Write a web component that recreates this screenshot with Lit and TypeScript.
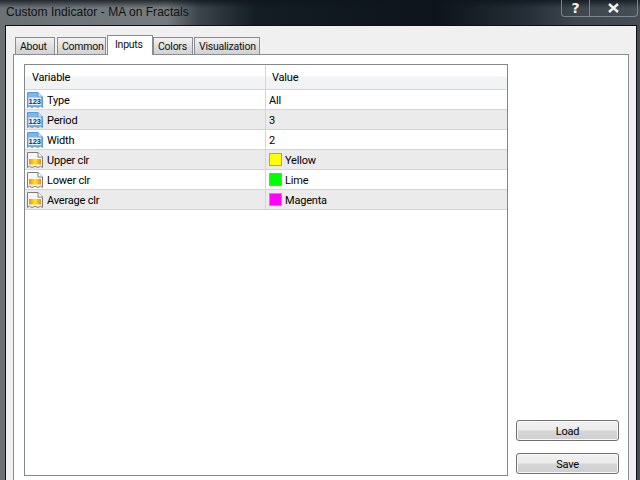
import { LitElement, html, css, svg } from "lit";
import { customElement } from "lit/decorators.js";

const rows = [
  { n: "Type", v: "All", k: "num" },
  { n: "Period", v: "3", k: "num" },
  { n: "Width", v: "2", k: "num" },
  { n: "Upper clr", v: "Yellow", k: "clr", c: "#ffff00" },
  { n: "Lower clr", v: "Lime", k: "clr", c: "#00ff00" },
  { n: "Average clr", v: "Magenta", k: "clr", c: "#ff00ff" },
];
const tabs = ["About", "Common", "Inputs", "Colors", "Visualization"];

const page = "M.5 .5H11L15.5 5V15.5L13.5 14.2L11 15.5L8 14.2L5 15.5L2.5 14.2L.5 15.5Z";
const numIcon = svg`<svg class="ico" width="16" height="16" viewBox="0 0 16 16">
  <path d=${page} fill="#7db6ea" stroke="#5a9ad6"/>
  <path d="M11 .5V5H15.5" fill="#cfe6fa" stroke="#5a9ad6"/>
  <rect x="1.5" y="5.5" width="12.5" height="7.5" fill="#e6f2fd"/>
  <text x="7.8" y="12.2" text-anchor="middle" font-family="Liberation Sans" font-size="7.5" font-weight="700" letter-spacing="0" fill="#0b3570">123</text>
</svg>`;
const clrIcon = svg`<svg class="ico" width="16" height="16" viewBox="0 0 16 16">
  <path d=${page} fill="#f7f7f7" stroke="#7c7c7c"/>
  <path d="M11 .5V5H15.5" fill="#fff" stroke="#7c7c7c"/>
  <defs><linearGradient id="g" x1="0" x2="1"><stop offset="0" stop-color="#f4890c"/><stop offset=".5" stop-color="#ffe81c"/><stop offset="1" stop-color="#f4890c"/></linearGradient></defs>
  <rect x="2" y="7" width="12" height="5.5" fill="url(#g)"/>
</svg>`;

@customElement("app-root")
export class AppRoot extends LitElement {
  static styles = css`
    :host {
      display: block;
      width: 640px;
      height: 480px;
      overflow: hidden;
      font-family: Roboto, "Liberation Sans", sans-serif;
      font-size: 11px;
      letter-spacing: -0.2px;
      color: #000;
      background:
        linear-gradient(rgba(14, 21, 28, 0.8) 0, rgba(14, 21, 28, 0) 8px),
        linear-gradient(90deg, #6a7275 0, #757c7f 26%, #3c454b 31%, #141c24 40%, #0d141b 68%, #252e36 82%, #3e474e 90%, #454e55 100%);
    }
    .title {
      height: 25px;
      display: flex;
      align-items: flex-start;
      justify-content: space-between;
    }
    .cap {
      padding: 5px 0 0 6px;
      font: 12px "Liberation Sans", sans-serif;
      letter-spacing: 0.04px;
      color: #111;
    }
    .caps {
      display: flex;
      margin-right: 2px;
      height: 16px;
      border: 1px solid #7d868c;
      border-top: 0;
      border-radius: 0 0 4px 4px;
      color: #f2f2f2;
      font: 700 14px "DejaVu Sans", sans-serif;
    }
    .caps span { display: flex; align-items: center; justify-content: center; }
    .help { width: 27px; border-right: 1px solid #7d868c; }
    .close { width: 47px; }
    .client {
      box-sizing: border-box;
      height: 455px;
      margin: 0 3px 0 5px;
      padding: 10px 7px 0 7px;
      background: #f0f0f0;
      border: 1px solid #101010;
      border-bottom: 0;
    }
    .tabs { display: flex; height: 18px; padding-left: 2px; align-items: flex-end; }
    .tab {
      box-sizing: border-box;
      height: 17px;
      margin-right: 2px;
      padding: 2px 0 0 4px;
      font-size: 10.5px;
      letter-spacing: -0.25px;
      background: linear-gradient(#f2f2f2, #e0e0e0 50%, #d2d2d2);
      border: 1px solid #898c95;
      border-bottom: 0;
      white-space: nowrap;
      color: #111;
    }
    .tab:nth-child(1) { width: 40px; }
    .tab:nth-child(2) { width: 49px; margin-right: 1px; }
    .tab:nth-child(3) { width: 46px; margin-right: 0; padding-left: 7px; }
    .tab:nth-child(4) { width: 40px; margin-right: 1px; }
    .tab:nth-child(5) { width: 66px; }
    .tab.on {
      height: 20px;
      margin-bottom: -1px;
      background: #fff;
      position: relative;
      z-index: 1;
    }
    .pane {
      box-sizing: border-box;
      height: 430px;
      display: flex;
      padding: 9px 10px 0;
      gap: 8px;
      background: #fff;
      border: 1px solid #898c95;
      border-bottom: 0;
    }
    .list {
      box-sizing: border-box;
      flex: none;
      width: 484px;
      height: 412px;
      border: 1px solid #828790;
      background: #fff;
    }
    .row {
      display: grid;
      grid-template-columns: 240px 1fr;
      height: 20px;
      box-sizing: border-box;
      border-bottom: 1px solid #d5d5d5;
    }
    .row.alt { background: #ebebeb; }
    .head {
      height: 25px;
      background: linear-gradient(#fff 0, #fff 45%, #f3f4f6 50%, #f1f2f4 100%);
      border-bottom: 1px solid #d5d5d5;
    }
    .head .c { padding-left: 7px; }
    .head .c + .c { padding-left: 6px; }
    .c { display: flex; align-items: center; white-space: nowrap; padding-top: 1px; box-sizing: border-box; }
    .c + .c { border-left: 1px solid #d5d5d5; padding-left: 3px; }
    .ico { margin: -1px 4px 0 2px; flex: none; }
    .sw {
      box-sizing: border-box;
      width: 13px;
      height: 13px;
      margin: -1px 3px 0 0;
      border: 1px solid #a0a0a0;
    }
    .side {
      flex: none;
      display: flex;
      flex-direction: column;
      justify-content: flex-end;
      gap: 12px;
      padding-bottom: 2px;
      height: 412px;
      box-sizing: border-box;
    }
    .btn {
      box-sizing: border-box;
      width: 103px;
      height: 21px;
      padding-top: 1px;
      display: flex;
      align-items: center;
      justify-content: center;
      border: 1px solid #707070;
      border-radius: 3px;
      background: linear-gradient(#f2f2f2, #ebebeb 48%, #d6d6d6 52%, #cfcfcf);
      box-shadow: inset 0 0 0 1px #f8f8f8;
    }
  `;

  render() {
    return html`
      <div class="title">
        <div class="cap">Custom Indicator - MA on Fractals</div>
        <div class="caps">
          <span class="help">?</span>
          <span class="close">
            <svg width="13" height="10" viewBox="0 0 13 10"><path d="M2 1L11 9M11 1L2 9" stroke="#f2f2f2" stroke-width="2.4" fill="none"/></svg>
          </span>
        </div>
      </div>
      <div class="client">
        <div class="tabs">
          ${tabs.map((t, i) => html`<div class="tab ${i === 2 ? "on" : ""}">${t}</div>`)}
        </div>
        <div class="pane">
          <div class="list">
            <div class="row head"><div class="c">Variable</div><div class="c">Value</div></div>
            ${rows.map(
              (r, i) => html`<div class="row ${i % 2 ? "alt" : ""}">
                <div class="c">${r.k === "num" ? numIcon : clrIcon}${r.n}</div>
                <div class="c">
                  ${r.c ? html`<span class="sw" style="background:${r.c}"></span>` : ""}${r.v}
                </div>
              </div>`
            )}
          </div>
          <div class="side">
            <div class="btn">Load</div>
            <div class="btn">Save</div>
          </div>
        </div>
      </div>
    `;
  }
}
